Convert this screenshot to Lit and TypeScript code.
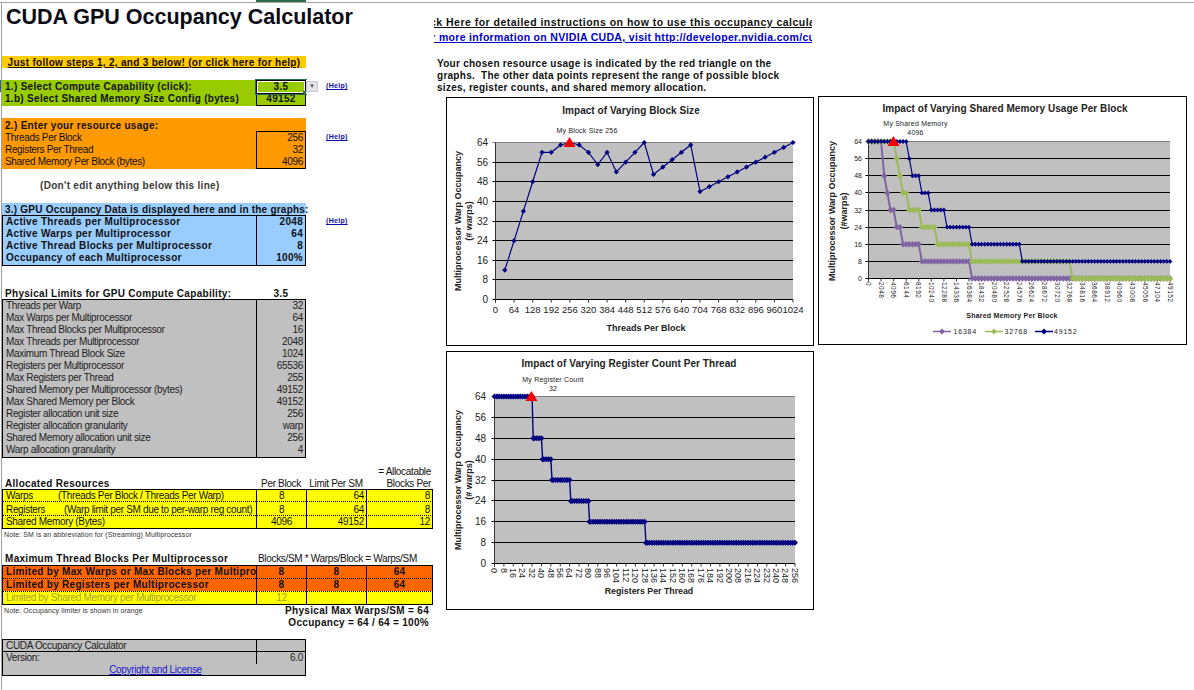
import { LitElement, html, css, svg, nothing } from "lit";
import { customElement } from "lit/decorators.js";

type Pt = [number, number];
interface Series { color: string; width: number; marker: number; pts: Pt[]; }
interface Cfg {
  frame: [number, number, number, number];
  plot: [number, number, number, number];
  xMax: number;
  series: Series[];
  title: [string, number, number];
  titleSize: number;
  notes: [string, number, number][];
  tri: [number, number];
  yLabelSize: number;
  yLabelX: number;
  xTicks: number[];
  xLabelSize: number;
  xLabelY: number;
  xRot: boolean;
  xSpacing: number;
  xTitle: [string, number, number, number];
  yTitle: [number, number, number];
  yTitle2: [string, number];
  legend?: boolean;
}

const range = (a: number, b: number, s: number) => {
  const o: number[] = [];
  for (let i = a; i <= b; i += s) o.push(i);
  return o;
};

const blockData = [12, 24, 36, 48, 60, 60, 63, 64, 63, 60, 55, 60, 52, 56, 60, 64, 51, 54, 57, 60, 63, 44, 46, 48, 50, 52, 54, 56, 58, 60, 62, 64];
const memSeries = (size: number): Pt[] =>
  range(0, 49152, 512).map((m) => [m, m === 0 ? 64 : Math.min(64, 8 * Math.floor(size / m))]);
const regValue = (r: number) => (r <= 32 ? 64 : r <= 40 ? 48 : r <= 48 ? 40 : r <= 64 ? 32 : r <= 80 ? 24 : r <= 128 ? 16 : 8);

const charts: Record<string, Cfg> = {
  block: {
    frame: [446, 98, 368, 249],
    plot: [495.5, 793, 143.5, 300.5],
    xMax: 1024,
    series: [{ color: "#000080", width: 1.2, marker: 2.6, pts: blockData.map((v, i) => [(i + 1) * 32, v]) }],
    title: ["Impact of Varying Block Size", 631, 114.5],
    titleSize: 10,
    notes: [["My Block Size 256", 587, 133.5]],
    tri: [569.5, 148],
    yLabelSize: 10,
    yLabelX: 488,
    xTicks: range(0, 1024, 64),
    xLabelSize: 9.5,
    xLabelY: 314,
    xRot: false,
    xSpacing: 0,
    xTitle: ["Threads Per Block", 646, 331.5, 9],
    yTitle: [461, 222, 9],
    yTitle2: ["(# warps)", 472],
  },
  mem: {
    frame: [818, 97, 369, 249],
    plot: [868.5, 1170, 142.5, 279.5],
    xMax: 49152,
    series: [
      { color: "#8064a2", width: 2, marker: 3.2, pts: memSeries(16384) },
      { color: "#9bbb59", width: 2, marker: 3.2, pts: memSeries(32768) },
      { color: "#000080", width: 1.2, marker: 2.4, pts: memSeries(49152) },
    ],
    title: ["Impact of Varying Shared Memory Usage Per Block", 1005, 113],
    titleSize: 10,
    notes: [["My Shared Memory", 915.5, 127], ["4096", 915.5, 136]],
    tri: [893.5, 147],
    yLabelSize: 7,
    yLabelX: 862,
    xTicks: range(0, 49152, 2048),
    xLabelSize: 6.5,
    xLabelY: 283,
    xRot: true,
    xSpacing: 0.5,
    xTitle: ["Shared Memory Per Block", 1012, 319, 7],
    yTitle: [835, 212, 9],
    yTitle2: ["(#warps)", 847],
    legend: true,
  },
  reg: {
    frame: [446, 352, 368, 259],
    plot: [494.5, 795, 397.5, 564.5],
    xMax: 256,
    series: [{ color: "#000080", width: 1.4, marker: 3, pts: [...range(0, 32, 2).map((r) => [r, 64] as Pt), ...range(33, 256, 1).filter((r) => r % 2 === 0 || [33, 41, 49, 65, 81, 129].includes(r)).map((r) => [r, regValue(r)] as Pt)] }],
    title: ["Impact of Varying Register Count Per Thread", 629, 368],
    titleSize: 10,
    notes: [["My Register Count", 553, 383], ["32", 553, 392]],
    tri: [531.5, 402],
    yLabelSize: 10,
    yLabelX: 486,
    xTicks: range(0, 256, 8),
    xLabelSize: 9,
    xLabelY: 569,
    xRot: true,
    xSpacing: 0,
    xTitle: ["Registers Per Thread", 649, 595, 8.8],
    yTitle: [461, 481, 9],
    yTitle2: ["(# warps)", 472],
  },
};

function renderChart(c: Cfg) {
  const [fx, fy, fw, fh] = c.frame;
  const [x0, x1, y0, y1] = c.plot;
  const X = (v: number) => x0 + (v / c.xMax) * (x1 - x0);
  const Y = (v: number) => y1 - (v / 64) * (y1 - y0);
  const ys = range(0, 64, 8);
  const [tx, tb] = c.tri;
  return html`<svg class="plot" width=${fw - 2} height=${fh - 2} viewBox="${fx + 1} ${fy + 1} ${fw - 2} ${fh - 2}">
    <rect x=${x0} y=${y0} width=${x1 - x0} height=${y1 - y0} fill="#c0c0c0"></rect>
    ${ys.map((v) => {
      const y = Math.round(Y(v) - 0.5) + 0.5;
      return svg`<line x1=${x0 - 3} x2=${x1} y1=${y} y2=${y} stroke=${v === 64 ? "#808080" : "#000"} stroke-width="1"></line>
      <text x=${c.yLabelX} y=${y + c.yLabelSize * 0.36} text-anchor="end" font-size=${c.yLabelSize}>${v}</text>`;
    })}
    <line x1=${x0} x2=${x0} y1=${y0} y2=${y1 + 3} stroke="#333"></line>
    ${c.xTicks.map((t) => svg`<line x1=${X(t)} x2=${X(t)} y1=${y1} y2=${y1 + 3} stroke="#333"></line>`)}
    ${c.xTicks.map((t) =>
      c.xRot
        ? svg`<text transform="translate(${X(t) - c.xLabelSize * 0.36} ${c.xLabelY}) rotate(90)" font-size=${c.xLabelSize} letter-spacing=${c.xSpacing}>${t}</text>`
        : svg`<text x=${X(t)} y=${c.xLabelY} text-anchor="middle" font-size=${c.xLabelSize}>${t}</text>`
    )}
    ${c.series.map((s) => svg`
      <polyline fill="none" stroke=${s.color} stroke-width=${s.width} points=${s.pts.map(([a, b]) => `${X(a)},${Y(b)}`).join(" ")}></polyline>
      ${s.pts.map(([a, b]) => {
        const px = X(a), py = Y(b), m = s.marker;
        return svg`<polygon fill=${s.color} points="${px - m},${py} ${px},${py - m} ${px + m},${py} ${px},${py + m}"></polygon>`;
      })}`)}
    <polygon fill="#f40000" points="${tx - 6},${tb} ${tx},${tb - 10} ${tx + 6},${tb}"></polygon>
    <text x=${c.title[1]} y=${c.title[2]} text-anchor="middle" font-size=${c.titleSize} font-weight="700" letter-spacing="0.05">${c.title[0]}</text>
    ${c.notes.map(([t, x, y]) => svg`<text x=${x} y=${y} text-anchor="middle" font-size="7" letter-spacing="0.2">${t}</text>`)}
    <text x=${c.xTitle[1]} y=${c.xTitle[2]} text-anchor="middle" font-size=${c.xTitle[3]} font-weight="700" letter-spacing=${c.xTitle[3] < 8 ? 0.2 : 0}>${c.xTitle[0]}</text>
    <text transform="translate(${c.yTitle[0]} ${c.yTitle[1]}) rotate(-90)" text-anchor="middle" font-size=${c.yTitle[2]} font-weight="700">Multiprocessor Warp Occupancy</text>
    <text transform="translate(${c.yTitle2[1]} ${c.yTitle[1]}) rotate(-90)" text-anchor="middle" font-size=${c.yTitle[2]} font-weight="700">${c.yTitle2[0]}</text>
    ${c.legend
      ? [["#8064a2", 933, 953.5, "16384"], ["#9bbb59", 985, 1004.5, "32768"], ["#000080", 1035, 1054, "49152"]].map(
          ([col, lx, tx2, lab]) => svg`
          <line x1=${lx} x2=${(lx as number) + 18} y1="332.5" y2="332.5" stroke=${col} stroke-width="1.5"></line>
          <polygon fill=${col} points="${(lx as number) + 6},332.5 ${(lx as number) + 9},329.5 ${(lx as number) + 12},332.5 ${(lx as number) + 9},335.5"></polygon>
          <text x=${tx2} y="335" font-size="7" letter-spacing="0.8">${lab}</text>`
        )
      : nothing}
  </svg>`;
}

const limits: [string, string][] = [
  ["Threads per Warp", "32"],
  ["Max Warps per Multiprocessor", "64"],
  ["Max Thread Blocks per Multiprocessor", "16"],
  ["Max Threads per Multiprocessor", "2048"],
  ["Maximum Thread Block Size", "1024"],
  ["Registers per Multiprocessor", "65536"],
  ["Max Registers per Thread", "255"],
  ["Shared Memory per Multiprocessor (bytes)", "49152"],
  ["Max Shared Memory per Block", "49152"],
  ["Register allocation unit size", "256"],
  ["Register allocation granularity", "warp"],
  ["Shared Memory allocation unit size", "256"],
  ["Warp allocation granularity", "4"],
];
const usage: [string, string][] = [
  ["Threads Per Block", "256"],
  ["Registers Per Thread", "32"],
  ["Shared Memory Per Block (bytes)", "4096"],
];
const occ: [string, string][] = [
  ["Active Threads per Multiprocessor", "2048"],
  ["Active Warps per Multiprocessor", "64"],
  ["Active Thread Blocks per Multiprocessor", "8"],
  ["Occupancy of each Multiprocessor", "100%"],
];

@customElement("app-root")
export class AppRoot extends LitElement {
  static styles = css`
    :host { display: block; width: 1194px; height: 690px; overflow: hidden; background: #fff; font-family: "Liberation Sans", Arial, sans-serif; font-size: 10px; color: #111; letter-spacing: -0.33px; }
    * { box-sizing: border-box; }
    .top { height: 3px; border-bottom: 1px solid #a6a6a6; padding-left: 256px; }
    .top i { display: block; width: 50px; height: 2px; background: #2b6e4a; }
    .main { display: flex; align-items: flex-start; height: 687px; }
    .rail { width: 2px; height: 100%; border-right: 1px solid #a0a0a0; padding-top: 77px; flex: none; }
    .rail i { display: block; width: 1px; height: 12px; background: #2b6e4a; }
    .sheet { width: 432px; flex: none; }
    .right { flex: 1; min-width: 0; }

    .title { height: 53px; padding: 0 0 0 4px; font-size: 21.5px; font-weight: 700; line-height: 28px; letter-spacing: 0; color: #0b0b14; white-space: nowrap; }
    .r { display: grid; grid-template-columns: 254px 50px 60px 67px; width: 431px; height: 12px; line-height: 14px; white-space: nowrap; }
    .two { grid-template-columns: 254px 50px; width: 304px; }
    .r > div { padding: 0 2px 0 3px; min-width: 0; }
    .b { font-weight: 700; letter-spacing: 0.3px; }
    .sp12 { height: 12px; } .sp14 { height: 14px; } .sp24 { height: 24px; } .sp11 { height: 11px; } .sp10 { height: 10px; }
    .helpbar { height: 12px; width: 304px; background: #ffcc00; text-align: center; line-height: 13px; white-space: nowrap; text-decoration: underline; font-weight: 700; letter-spacing: 0.3px; color: #1a0a00; }
    .green { background: #99cc00; }
    .orange { background: #ff9900; }
    .blue { background: #99ccff; }
    .gray { background: #c0c0c0; color: #222; }
    .yellow { background: #ffff00; }
    .hot { background: #ff6600; }
    .num { text-align: right; }
    .ctr { text-align: center; }
    .ctr.ctr { padding: 0; }
    .box { border: 1px solid #000; line-height: 12px; }
    .stack { border-top: none; line-height: 13px; }
    .help { font-size: 7px; font-weight: 700; color: #1010a0; text-decoration: underline; letter-spacing: 0.3px; line-height: 12px; }
    .help.help { padding-left: 20px; background: #fff; position: relative; }
    .dd { position: absolute; left: 0; top: 1px; width: 12px; height: 11px; background: #e4e4e8; border: 1px solid #c8c8d0; color: #555; font-size: 6px; line-height: 9px; text-align: center; text-decoration: none; font-weight: 400; }
    .sel { outline: 1px solid #2b6e4a; box-shadow: inset 0 0 0 1px #fff; position: relative; }
    .sel::after { content: ""; position: absolute; right: -2px; bottom: -2px; width: 4px; height: 4px; background: #2b6e4a; }
    .edit { height: 13px; line-height: 16px; }
    .dark.dark { padding-left: 38px; color: #3a3a3a; }
    .blueHead { letter-spacing: 0.22px; }
    .tb { border-top: 1px solid #000; line-height: 12px; }
    .bb { border-bottom: 1px solid #000; }
    .lb { border-left: 1px solid #000; }
    .rb { border-right: 1px solid #000; }
    .dot { border-top: 1px dotted #000; }
    .clip { overflow: hidden; }
    .h12 { height: 12px; }
    .h14 { height: 14px; line-height: 16px; }
    .h13 { height: 13px; line-height: 12px; }
    .labA { display: inline-block; width: 52px; }
    .labB { display: inline-block; width: 58px; }
    .note { font-size: 7px; letter-spacing: 0.1px; color: #333; line-height: 14px; height: 12px; padding-left: 2px; white-space: nowrap; }
    .r > .note { padding-left: 2px; font-size: 7px; letter-spacing: 0.1px; }
    .dim { color: #a3a33a; }
    .span { grid-column: 2 / 5; text-align: right; }
    .r > .span { padding-right: 4px; }
    .r > .ratio { text-align: left; padding-left: 2px; }
    .maxrow { height: 13px; }
    .allspan { grid-column: 1 / 3; text-align: center; }
    a { color: #1a1ad0; text-decoration: underline; }

    .links { height: 42px; padding-top: 13px; }
    .lnk { width: 378px; height: 14px; display: flex; justify-content: center; overflow: hidden; white-space: nowrap; font-size: 10.5px; line-height: 13px; font-weight: 700; letter-spacing: 0.48px; text-decoration: underline; }
    .lnk span { flex: none; }
    .lnk + .lnk { margin-top: 1px; color: #0000cc; letter-spacing: 0.32px; }
    .para { padding: 13px 0 0 3px; height: 51px; font-weight: 700; letter-spacing: 0.27px; line-height: 12px; white-space: nowrap; }
    .charts { display: flex; align-items: flex-start; gap: 4px; padding-left: 12px; }
    .col { display: flex; flex-direction: column; gap: 5px; padding-top: 1px; width: 368px; flex: none; }
    .chart { border: 1px solid #000; background: #fff; flex: none; }
    .plot { display: block; font-family: "Liberation Sans", Arial, sans-serif; fill: #222; letter-spacing: 0; }
  `;

  render() {
    return html`
      <div class="top"><i></i></div>
      <div class="main">
        <div class="rail"><i></i></div>
        <div class="sheet">
          <div class="title">CUDA GPU Occupancy Calculator</div>
          <div class="helpbar">Just follow steps 1, 2, and 3 below! (or click here for help)</div>
          <div class="sp12"></div>

          <div class="r">
            <div class="green b">1.) Select Compute Capability (click):</div>
            <div class="green b box ctr sel">3.5</div>
            <div class="help"><span class="dd">▼</span>(Help)</div>
          </div>
          <div class="r two">
            <div class="green b">1.b) Select Shared Memory Size Config (bytes)</div>
            <div class="green b box stack ctr">49152</div>
          </div>
          <div class="sp14"></div>

          <div class="r two edit orange"><div class="b">2.) Enter your resource usage:</div><div></div></div>
          ${usage.map(([l, v], i) => html`
            <div class="r">
              <div class="orange">${l}</div>
              <div class="orange box num ${i ? "stack" : ""}">${v}</div>
              ${i === 0 ? html`<div class="help">(Help)</div>` : nothing}
            </div>`)}
          <div class="sp12"></div>
          <div class="r"><div class="b dark">(Don't edit anything below this line)</div></div>
          <div class="sp12"></div>

          <div class="r two blue"><div class="b blueHead">3.) GPU Occupancy Data is displayed here and in the graphs:</div><div></div></div>
          ${occ.map(([l, v], i) => html`
            <div class="r">
              <div class="blue b lb ${i === 0 ? "tb" : ""} ${i === 3 ? "bb" : ""}">${l}</div>
              <div class="blue b num lb rb ${i === 0 ? "tb" : ""} ${i === 3 ? "bb" : ""}">${v}</div>
              ${i === 0 ? html`<div class="help">(Help)</div>` : nothing}
            </div>`)}
          <div class="sp24"></div>

          <div class="r"><div class="b">Physical Limits for GPU Compute Capability:</div><div class="b ctr">3.5</div></div>
          ${limits.map(([l, v], i) => html`
            <div class="r two">
              <div class="gray lb ${i === 0 ? "tb" : ""} ${i === 12 ? "bb" : ""}">${l}</div>
              <div class="gray num lb rb ${i === 0 ? "tb" : ""} ${i === 12 ? "bb" : ""}">${v}</div>
            </div>`)}
          <div class="sp10"></div>

          <div class="r"><div></div><div></div><div></div><div class="num">= Allocatable</div></div>
          <div class="r"><div class="b">Allocated Resources</div><div class="ctr">Per Block</div><div class="ctr">Limit Per SM</div><div class="num">Blocks Per</div></div>

          <div class="r h12">
            <div class="yellow lb tb"><span class="labA">Warps</span>(Threads Per Block / Threads Per Warp)</div>
            <div class="yellow lb tb ctr">8</div><div class="yellow lb tb num">64</div><div class="yellow lb rb tb num">8</div>
          </div>
          <div class="r h14">
            <div class="yellow lb dot"><span class="labB">Registers</span>(Warp limit per SM due to per-warp reg count)</div>
            <div class="yellow lb dot ctr">8</div><div class="yellow lb dot num">64</div><div class="yellow lb rb dot num">8</div>
          </div>
          <div class="r h13">
            <div class="yellow lb dot bb">Shared Memory (Bytes)</div>
            <div class="yellow lb dot bb ctr">4096</div><div class="yellow lb dot bb num">49152</div><div class="yellow lb rb dot bb num">12</div>
          </div>
          <div class="note">Note: SM is an abbreviation for (Streaming) Multiprocessor</div>
          <div class="sp12"></div>

          <div class="r maxrow"><div class="b">Maximum Thread Blocks Per Multiprocessor</div><div class="span ratio">Blocks/SM * Warps/Block = Warps/SM</div></div>
          <div class="r h13">
            <div class="hot b lb tb clip">Limited by Max Warps or Max Blocks per Multiprocessor</div>
            <div class="hot b lb tb ctr">8</div><div class="hot b lb tb ctr">8</div><div class="hot b lb rb tb ctr">64</div>
          </div>
          <div class="r h13">
            <div class="hot b lb dot">Limited by Registers per Multiprocessor</div>
            <div class="hot b lb dot ctr">8</div><div class="hot b lb dot ctr">8</div><div class="hot b lb rb dot ctr">64</div>
          </div>
          <div class="r h13">
            <div class="yellow dim lb dot bb">Limited by Shared Memory per Multiprocessor</div>
            <div class="yellow dim lb dot bb ctr">12</div><div class="yellow lb dot bb"></div><div class="yellow lb rb dot bb"></div>
          </div>
          <div class="r"><div class="note">Note: Occupancy limiter is shown in orange</div><div class="b span">Physical Max Warps/SM = 64</div></div>
          <div class="r"><div></div><div class="b span">Occupancy = 64 / 64 = 100%</div></div>
          <div class="sp11"></div>

          <div class="r two"><div class="gray lb tb">CUDA Occupancy Calculator</div><div class="gray lb rb tb"></div></div>
          <div class="r two"><div class="gray lb tb">Version:</div><div class="gray lb rb tb num">6.0</div></div>
          <div class="r two gray lb rb tb bb h13"><div class="allspan"><a>Copyright and License</a></div></div>
        </div>

        <div class="right">
          <div class="links">
            <div class="lnk"><span>Click Here for detailed instructions on how to use this occupancy calculator</span></div>
            <div class="lnk"><span>For more information on NVIDIA CUDA, visit http://developer.nvidia.com/cuda</span></div>
          </div>
          <div class="para">
            Your chosen resource usage is indicated by the red triangle on the<br />
            graphs.&nbsp; The other data points represent the range of possible block<br />
            sizes, register counts, and shared memory allocation.
          </div>
          <div class="charts">
            <div class="col">
              <div class="chart">${renderChart(charts.block)}</div>
              <div class="chart">${renderChart(charts.reg)}</div>
            </div>
            <div class="chart">${renderChart(charts.mem)}</div>
          </div>
        </div>
      </div>
    `;
  }
}
